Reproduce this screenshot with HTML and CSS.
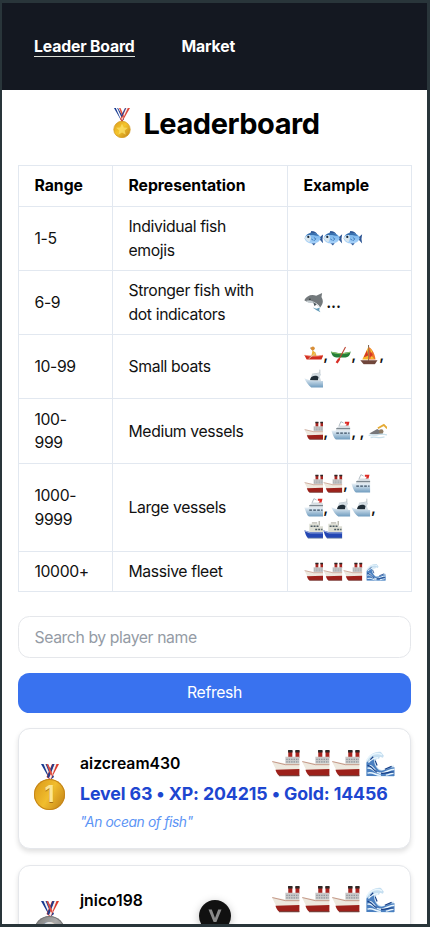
FILE: index.html
```html
<!DOCTYPE html>
<html lang="en">
<head>
<meta charset="utf-8">
<title>Leaderboard</title>
<link rel="stylesheet" href="styles.css">
</head>
<body>
<svg class="sprite" aria-hidden="true">
  <defs>
    <linearGradient id="gold" x1="0" y1="0" x2="1" y2="1"><stop offset="0" stop-color="#d99a1c"/><stop offset=".45" stop-color="#f5c52c"/><stop offset="1" stop-color="#bd7f18"/></linearGradient>
    <linearGradient id="hull" x1="0" y1="0" x2="0" y2="1"><stop offset="0" stop-color="#e9f1f7"/><stop offset="1" stop-color="#6f9cbf"/></linearGradient>
    <linearGradient id="body" x1="0" y1="0" x2="0" y2="1"><stop offset="0" stop-color="#6faee8"/><stop offset="1" stop-color="#a9d3fa"/></linearGradient>
    <symbol id="ship" viewBox="0 0 30 30">
      <path d="M17.5 2h4.2v7h-4.2zM25 2h4v7h-4z" fill="#a92520"/>
      <path d="M17.3 1h4.6v2.5h-4.6zM24.8 1h4.4v2.5h-4.4z" fill="#2c2726"/>
      <path d="M14.5 8H29V16H14.5z" fill="#c9c8c8"/>
      <path d="M15.5 10.7h13M15.5 13.3h13" stroke="#8c959c" stroke-width="1.1" stroke-dasharray="1.4 1.1"/>
      <path d="M.5 12.500l14 2.500H29v8H5.500C4 19 2 16 .5 12.500z" fill="#eee9df"/>
      <path d="M1 13l13.500 3.200H29" fill="none" stroke="#b0705e" stroke-width=".7"/>
      <path d="M4.300 21.500L29 20.800V28H9.500c-2.600 0-4.200-3.400-5.200-6.500z" fill="#9d211b"/>
      <path d="M8 27.700h21" stroke="#6d4a44"/>
    </symbol>
    <symbol id="wave" viewBox="0 0 30 30">
      <path d="M1 28V12C3 6 10 2 16 3l3 4-1 2-3-1-1 2-2-.3c-3 3-2 8 2 11 5 3 10-2 15-4l.5 12z" fill="#c5def0"/>
      <path d="M1 28V14c2-2 5-4 8-4-1 3 1 9 5 12 5 2 9-3 16-3v9z" fill="#4a7fc0"/>
      <path d="M1 12C5 5 12 3 17 6M3 14c3-4 6-5 10-5M2 20c5-2 7 5 13 5s9-4 15-4M2 25c6-2 9 3 14 2M4 17c3 0 4 3 6 5M21 27c3 0 5-2 8-2" fill="none" stroke="#e9f6fd" stroke-width="1.500"/>
      <path d="M2 17c4 0 6 5 10 7M5 11l3-3M16 25c5 1 9-2 13-1M20 21l7-3M10 12l2 5" fill="none" stroke="#173f87" stroke-width="1.200"/>
    </symbol>
    <symbol id="liner" viewBox="0 0 30 30">
      <path d="M21 1h7l-2 8h-5l3-5h-3z" fill="#dc2b25"/><path d="M15 1l-3 7M15 1l4 2" stroke="#a3afb8" stroke-width="1.300"/>
      <path d="M9 10l5-3h13l2 2v6H7z" fill="#d6dde2"/><path d="M8 11.500h21" stroke="#6b7780" stroke-width="1.400"/>
      <path d="M.5 14.500H29V28H8c-3 0-5-7-7.500-13.500z" fill="url(#hull)"/>
      <path d="M8 18.500h20" stroke="#394d61" stroke-width="2" stroke-dasharray="4 2"/>
    </symbol>
    <symbol id="motor" viewBox="0 0 30 30">
      <path d="M24 1v8M12 8l12-2" stroke="#a9b5bc" stroke-width="1.200"/>
      <path d="M11 10l5-3h8l2 1-2 4 2 6H9z" fill="#d3dce2"/><path d="M10 14c1-4 9-5 12-2l-1 5H9z" fill="#1f2c36"/>
      <path d="M.5 14c8 4 16 4 28.500 4v10H11C7 25 3 20 .5 14z" fill="url(#hull)"/>
    </symbol>
    <symbol id="ferry" viewBox="0 0 30 30">
      <path d="M23 0v7M12 3h8" stroke="#8a8878" stroke-width="1.300"/>
      <path d="M8 4h14v4H29v10H8z" fill="#dedfd5"/><path d="M10 8h12M17 13h11" stroke="#4d5b63" stroke-width="2.200" stroke-dasharray="3 1.500"/>
      <path d="M.5 14l8 2.500H29V26H6C3 23 2 19 .5 14z" fill="#2447b4"/><path d="M1 15l8 3h20" fill="none" stroke="#e8eef5"/><path d="M6 26h23" stroke="#88969f"/>
    </symbol>
    <symbol id="rowboat" viewBox="0 0 30 30">
      <path d="M14 8l-4-4" stroke="#8a5a32" stroke-width="2"/><circle cx="13.500" cy="5" r="2.800" fill="#d98e35"/>
      <path d="M13 8l5 4 1 5h-8z" fill="#f0b437"/>
      <path d="M.5 15c9 2 20 2 29 0l-3 7H4z" fill="#d22d20"/><path d="M1 15.500c9 2 19 2 28 0" fill="none" stroke="#f7a28d"/><path d="M18 12L7 21" stroke="#d8c3a3" stroke-width="1.500"/>
    </symbol>
    <symbol id="canoe" viewBox="0 0 30 30">
      <path d="M0 10c9 3 21 3 30 0-1 6-4 9-8 9H8c-4 0-7-3-8-9z" fill="#268039"/><path d="M1 11c9 3 19 3 28 0" fill="none" stroke="#8fc26a" stroke-width="1.500"/>
      <path d="M22 3L11 24" stroke="#bd4431" stroke-width="1.700"/><path d="M11 20l3 2-4 6-3-2z" fill="#d82d25"/>
    </symbol>
    <symbol id="sail" viewBox="0 0 30 30">
      <path d="M14.500 0v24" stroke="#705039" stroke-width="1.400"/><path d="M14 3L5 22h9z" fill="#f5b529"/><path d="M15 3c6 4 9 11 10 19H15z" fill="#ef772b"/>
      <path d="M12 8l-5 11 7-3zM16 7l5 8-5 4z" fill="#d63928"/><path d="M17 5l3 5-2 2zM19 17l4 4h-6z" fill="#f7cc36"/><path d="M2 23h26l-4 6H7z" fill="#70463b"/>
    </symbol>
    <symbol id="swim" viewBox="0 0 30 30">
      <path d="M2 19l12-7 8 5v3H6z" fill="#77777a"/><circle cx="20" cy="16" r="3.500" fill="#8d7a63"/><path d="M15 11l9-5 5 5" fill="none" stroke="#e5ab36" stroke-width="2.800"/>
      <path d="M1 22c5-3 8 1 13-1s10-1 15 0M4 25c7-2 13 2 21-1" fill="none" stroke="#c9e0eb" stroke-width="2"/>
    </symbol>
    <symbol id="fish" viewBox="0 0 30 30">
      <path d="M9 8l2-5c5 0 8 2 10 6zM10 20l5 5 3-4zM22 14l7-6-1 7 1 7z" fill="#2f5795"/>
      <ellipse cx="13" cy="14" rx="12" ry="8" fill="url(#body)"/><path d="M3 10c5-6 14-6 20 1-6-2-13-3-20-1z" fill="#386fae"/>
      <path d="M1 14c2-4 5-5 8-5 2 3 2 7-1 11-3-1-5-3-7-6z" fill="#d9e6ee"/><circle cx="6.500" cy="12" r="1.700" fill="#18283a"/><path d="M15 13l3 2-3 3M11 15l3 2" fill="none" stroke="#3978ba" stroke-width="1.400"/>
    </symbol>
    <symbol id="dolphin" viewBox="0 0 30 30">
      <path d="M.5 11c3-7 11-10 18-7l9-4-1 6c3 5 3 10-2 16-2-4-6-8-11-8-4 0-8 1-13-3z" fill="#73797c"/>
      <path d="M3 12c8-2 15 1 20 10-3-4-7-7-11-7-3 0-6 0-9-3z" fill="#c4ccd0"/><path d="M14 14l2 6 3-3z" fill="#4e595e"/>
      <path d="M13 22l6 2 5-2-1 4 2 3-6-3z" fill="#639bb8"/><circle cx="9" cy="9.500" r="1" fill="#222"/>
    </symbol>
    <symbol id="ribbon" viewBox="0 0 32 16">
      <path d="M7 0h7l6 13-4 3z" fill="#173a91"/><path d="M9.500 0h2l6 14h-2z" fill="#f4f4f5"/>
      <path d="M25 0h-7l-5.500 13 4 3z" fill="#dc3b2c"/><path d="M22.500 0h-2.200l-5.500 14 2 1z" fill="#f1f2f5"/><path d="M18.500 0h2L15 14l-2-1z" fill="#213d8d"/><path d="M12.500 0H14l4.500 10-1.500 2z" fill="#e45040"/>
    </symbol>
  </defs>
</svg>
<div class="window">
  <nav class="nav"><a class="link active">Leader Board</a><a class="link">Market</a></nav>
  <main class="main">
    <h1 class="title">
      <svg class="title-medal" viewBox="0 0 18 30"><path d="M1 0h4l6 11-2 3z" fill="#173a91"/><path d="M2.800 0h1.400l5 11-1 1z" fill="#fff"/><path d="M17 0h-4L7 11l2 3z" fill="#dc4638"/><path d="M14.800 0h-1.500l-5 11 1 1z" fill="#f3f3f6"/><path d="M6 0h1.500L11 8l-1 3z" fill="#e25342"/><path d="M12 0h1L9 9 8 8z" fill="#263e91"/><circle cx="9" cy="21.500" r="8.200" fill="url(#gold)" stroke="#d49a21" stroke-width=".8"/><path d="M9 15.500l1.700 4 4.300.3-3.300 2.800 1 4.200L9 24.500l-3.700 2.300 1-4.200L3 19.800l4.300-.3z" fill="#fbe16b" fill-opacity=".75"/></svg>
      <span>Leaderboard</span>
    </h1>
    <table class="ranges">
      <colgroup><col class="c1"><col class="c2"><col class="c3"></colgroup>
      <tr class="short"><th>Range</th><th>Representation</th><th>Example</th></tr>
      <tr class="mid"><td>1-5</td><td>Individual fish emojis</td><td><div class="line"><svg><use href="#fish"/></svg><svg><use href="#fish"/></svg><svg><use href="#fish"/></svg></div></td></tr>
      <tr class="mid"><td>6-9</td><td>Stronger fish with dot indicators</td><td><div class="line"><svg><use href="#dolphin"/></svg><span class="dots">...</span></div></td></tr>
      <tr class="mid"><td>10-99</td><td>Small boats</td><td><div class="line"><svg><use href="#rowboat"/></svg><i>,</i><svg><use href="#canoe"/></svg><i>,</i><svg><use href="#sail"/></svg><i>,</i></div><div class="line"><svg><use href="#motor"/></svg></div></td></tr>
      <tr class="mid"><td>100-<br>999</td><td>Medium vessels</td><td><div class="line"><svg><use href="#ship"/></svg><i>,</i><svg><use href="#liner"/></svg><i>,</i><i>,</i><svg><use href="#swim"/></svg></div></td></tr>
      <tr class="tall"><td>1000-<br>9999</td><td>Large vessels</td><td><div class="line"><svg><use href="#ship"/></svg><svg><use href="#ship"/></svg><i>,</i><svg><use href="#liner"/></svg></div><div class="line"><svg><use href="#liner"/></svg><i>,</i><svg><use href="#motor"/></svg><svg><use href="#motor"/></svg><i>,</i></div><div class="line"><svg><use href="#ferry"/></svg><svg><use href="#ferry"/></svg></div></td></tr>
      <tr class="short"><td>10000+</td><td>Massive fleet</td><td><div class="line"><svg><use href="#ship"/></svg><svg><use href="#ship"/></svg><svg><use href="#ship"/></svg><svg class="spaced"><use href="#wave"/></svg></div></td></tr>
    </table>
    <input class="search" type="text" placeholder="Search by player name">
    <button class="refresh">Refresh</button>
    <section class="card">
      <div class="medal"><svg class="ribbon"><use href="#ribbon"/></svg><span class="disc">1</span></div>
      <div class="info">
        <div class="top"><span class="name">aizcream430</span><span class="fleet"><svg><use href="#ship"/></svg><svg><use href="#ship"/></svg><svg><use href="#ship"/></svg><svg class="sea"><use href="#wave"/></svg></span></div>
        <div class="stats">Level 63 • XP: 204215 • Gold: 14456</div>
        <div class="quote">"An ocean of fish"</div>
      </div>
    </section>
    <section class="card">
      <div class="medal"><svg class="ribbon"><use href="#ribbon"/></svg><span class="disc second">2</span></div>
      <div class="info">
        <div class="top"><span class="name">jnico198</span><span class="fleet"><svg><use href="#ship"/></svg><svg><use href="#ship"/></svg><svg><use href="#ship"/></svg><svg class="sea"><use href="#wave"/></svg></span></div>
        <div class="stats">Level 57 • XP: 171158 • Gold: 12740</div>
      </div>
    </section>
  </main>
  <div class="badge"><svg viewBox="0 0 32 32"><path d="M9.500 9.500h3.300L16 18l3.200-8.500h3.300L17.400 22h-2.800z" fill="#8b8b8b"/></svg></div>
</div>
</body>
</html>
```
FILE: styles.css
```css
* { box-sizing: border-box; }
body { margin: 0; font: 400 15.75px/23.75px Inter, "Liberation Sans", sans-serif; color: #111; letter-spacing: -0.37px; }
.sprite { position: absolute; width: 0; height: 0; }
.window { position: relative; height: 927px; overflow: hidden; background: #fff; border: solid #29353a; border-width: 3px 3px 3px 2px; }
.nav { display: flex; align-items: center; gap: 47px; height: 87px; padding-left: 32px; background: #141821; }
.link { color: #fff; font-weight: 700; line-height: 19px; letter-spacing: -0.15px; border-bottom: 1px solid transparent; }
.link.active { border-color: #dde0d8; }
.main { padding: 0 16px; width: 425px; }
.title { display: flex; justify-content: center; align-items: center; gap: 12px; height: 75px; margin: 0; padding: 0 0 7px 4px; font-size: 29px; font-weight: 700; letter-spacing: -0.45px; color: #000; }
.title-medal { width: 18px; height: 30px; margin-top: -2px; }
.ranges { width: 393px; table-layout: fixed; border-collapse: collapse; }
.c1 { width: 94px; }
.c2 { width: 175px; }
.c3 { width: 124px; }
th, td { border: 1px solid #e2e8f0; padding: 1px 15.5px 0; text-align: left; vertical-align: middle; }
th { font-weight: 700; color: #000; letter-spacing: -0.03px; }
.short { height: 40.5px; }
.mid { height: 64.25px; }
.tall { height: 88px; }
.line { display: flex; align-items: center; height: 23.75px; white-space: nowrap; }
.line svg { width: 19.8px; height: 19.8px; flex: none; }
.line i { width: 8.2px; font-style: normal; font-weight: 600; }
.line .spaced { margin-left: 3.5px; }
.dots { padding-left: 3px; letter-spacing: -0.2px; font-weight: 600; }
.search { display: block; width: 393px; height: 41.5px; margin: 24px 0 15.5px; padding: 1px 15.5px 0; border: 1px solid #e5e7eb; border-radius: 11.5px; background: #fff; font: inherit; letter-spacing: -0.4px; }
.search::placeholder { color: #949ba5; opacity: 1; }
.refresh { display: block; width: 393px; height: 39.5px; margin: 0 0 15.5px; padding: 1px 0 0; border: 0; border-radius: 11.5px; background: #3972ef; color: #fff; font: inherit; letter-spacing: -0.35px; }
.card { display: flex; width: 393px; height: 120.5px; margin-bottom: 16px; padding: 15px; border: 1px solid #e5e7eb; border-radius: 12px; background: #fff; box-shadow: 0 3px 5px rgba(0, 0, 0, .12); }
.medal { display: flex; flex-direction: column; align-items: center; width: 31px; padding-top: 20px; margin-right: 15px; }
.ribbon { width: 32px; height: 16px; flex: none; }
.disc { width: 31px; height: 31px; margin-top: -1px; flex: none; border-radius: 50%; background: linear-gradient(120deg, #d79518, #f1bd2d 50%, #bd7c15); box-shadow: inset 0 0 0 1px #c5851a; color: #fbe593; font-size: 23px; font-weight: 700; line-height: 31px; text-align: center; letter-spacing: 0; text-shadow: 0 1px #a96e10; }
.disc.second { background: linear-gradient(120deg, #777, #aaa 50%, #777); box-shadow: inset 0 0 0 1px #777; color: #ddd; text-shadow: 0 1px #555; }
.info { width: 315px; }
.top { display: flex; justify-content: space-between; height: 36px; }
.name { font-weight: 600; color: #000; line-height: 39px; letter-spacing: 0; }
.fleet { display: flex; padding-top: 4.5px; }
.fleet svg { width: 29.7px; height: 29px; }
.fleet .sea { margin-left: 4.5px; width: 30px; }
.stats { height: 28px; font-size: 17.75px; font-weight: 700; line-height: 28px; letter-spacing: -0.12px; color: #1d46d0; white-space: nowrap; }
.quote { font-size: 13.8px; font-style: italic; line-height: 29px; letter-spacing: -0.36px; color: #5c94f5; }
.badge { position: absolute; left: 197px; top: 897px; width: 32px; height: 32px; border-radius: 50%; background: #111; box-shadow: 0 2px 8px rgba(0, 0, 0, .25); }
.badge svg { display: block; width: 32px; height: 32px; }
```
